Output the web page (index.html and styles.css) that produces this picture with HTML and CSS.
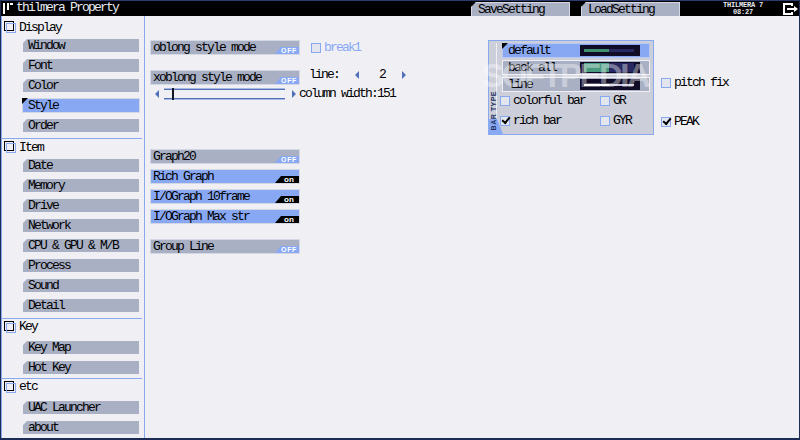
FILE: index.html
```html
<!DOCTYPE html>
<html lang="en">
<head>
    <meta charset="UTF-8">
    <title>thilmera Property</title>
    <link rel="stylesheet" href="styles.css">
</head>
<body>
    <div class="titlebar">
        <svg class="logo" width="12" height="14" viewBox="0 0 12 14"><path d="M0 2h2v11H0zM4 2h2v7H4zM7 2h3v2H7z" fill="#fff"/></svg>
        <span class="app-title">thilmera Property</span>
        <div class="tab tab-save">SaveSetting</div>
        <div class="tab tab-load">LoadSetting</div>
        <div class="clock">THILMERA 7<br>08:27</div>
        <svg class="exit" width="15" height="12" viewBox="0 0 15 12"><path d="M9 3V1H1v10h8V9" fill="none" stroke="#fff" stroke-width="2"/><path d="M4 5h7V3l4 3-4 3V7H4z" fill="#fff"/></svg>
    </div>

    <div class="content">
        <nav class="sidebar">
            <div class="group">
                <div class="group-head head-21"><span class="box"></span>Display</div>
                <div class="item">Window</div>
                <div class="item">Font</div>
                <div class="item">Color</div>
                <div class="item selected">Style</div>
                <div class="item">Order</div>
            </div>
            <div class="group">
                <div class="group-head"><span class="box"></span>Item</div>
                <div class="item">Date</div>
                <div class="item">Memory</div>
                <div class="item">Drive</div>
                <div class="item">Network</div>
                <div class="item">CPU &amp; GPU &amp; M/B</div>
                <div class="item">Process</div>
                <div class="item">Sound</div>
                <div class="item">Detail</div>
            </div>
            <div class="group group-short">
                <div class="group-head head-22"><span class="box"></span>Key</div>
                <div class="item">Key Map</div>
                <div class="item">Hot Key</div>
            </div>
            <div class="group group-last">
                <div class="group-head head-22"><span class="box"></span>etc</div>
                <div class="item">UAC Launcher</div>
                <div class="item">about</div>
            </div>
        </nav>

        <main class="main">
            <div class="options">
                <div class="row">
                    <div class="toggle">oblong style mode<span class="flag">OFF</span></div>
                    <label class="check check-off"><span class="tick"></span>break1</label>
                </div>
                <div class="row row-xoblong">
                    <div class="toggle">xoblong style mode<span class="flag">OFF</span></div>
                    <div class="line-count">
                        <span>line:</span>
                        <span class="arrow arrow-left"></span>
                        <span class="line-value">2</span>
                        <span class="arrow arrow-right"></span>
                    </div>
                </div>
                <div class="row row-slider">
                    <span class="arrow arrow-left"></span>
                    <div class="slider"><span class="thumb"></span></div>
                    <span class="arrow arrow-right"></span>
                    <span class="slider-label">column width:151</span>
                </div>

                <div class="stack">
                    <div class="toggle">Graph20<span class="flag">OFF</span></div>
                    <div class="toggle active">Rich Graph<span class="flag flag-on">on</span></div>
                    <div class="toggle active">I/OGraph 10frame<span class="flag flag-on">on</span></div>
                    <div class="toggle active">I/OGraph Max str<span class="flag flag-on">on</span></div>
                </div>
                <div class="toggle group-line">Group Line<span class="flag">OFF</span></div>
            </div>

            <div class="bar-area">
                <div class="bar-panel">
                    <div class="panel-side"></div>
                    <div class="panel-corner"></div>
                    <span class="side-text">BAR TYPE</span>
                    <div class="bar-type selected-type">default<span class="swatch"><span class="meter meter-default"></span></span></div>
                    <div class="bar-type">back all<span class="swatch"><span class="meter meter-all"></span></span></div>
                    <div class="bar-type">line<span class="swatch"><span class="meter meter-line"></span></span></div>
                    <div class="panel-checks">
                        <label class="check"><span class="tick"></span>colorful bar</label>
                        <label class="check"><span class="tick"></span>GR</label>
                        <label class="check"><span class="tick on"></span>rich bar</label>
                        <label class="check"><span class="tick"></span>GYR</label>
                    </div>
                </div>
                <div class="bar-extra">
                    <label class="check"><span class="tick"></span>pitch fix</label>
                    <label class="check"><span class="tick on"></span>PEAK</label>
                </div>
                <div class="watermark">SOFTPEDIA</div>
            </div>
        </main>
    </div>
</body>
</html>
```

FILE: styles.css
```css
body {
    margin: 0;
    width: 800px;
    height: 440px;
    overflow: hidden;
    background-color: #f0f0f4;
    color: #000;
    font-family: "Liberation Mono", "DejaVu Sans Mono", monospace;
    font-size: 13px;
    letter-spacing: -1.8px;
    line-height: 14px;
    display: flex;
    flex-direction: column;
    box-sizing: border-box;
    border-bottom: 2px solid #1c2c54;
    border-left: 1px solid #1c2c54;
    border-right: 1px solid #1c2c54;
}

/* top bar */
.titlebar {
    height: 15px;
    flex: none;
    background-color: #000;
    border-top: 1px solid #2c3c70;
    display: flex;
    align-items: flex-end;
    color: #fff;
}

.logo {
    margin: 0 0 1px 2px;
}

.app-title {
    margin: 0 0 1px 1px;
    width: 455px;
    flex: none;
    color: #e8e8f0;
}

.tab {
    width: 99px;
    height: 14px;
    flex: none;
    box-sizing: border-box;
    padding-left: 6px;
    background-color: #a9b0c4;
    border: 1px solid #d4d8e4;
    border-bottom: none;
    color: #000;
    line-height: 13px;
    clip-path: polygon(5px 0, 100% 0, 100% 100%, 0 100%, 0 5px);
}

.tab-load {
    margin-left: 11px;
}

.clock {
    width: 44px;
    margin-left: 41px;
    height: 14px;
    flex: none;
    color: #e8e8f0;
    font-size: 7px;
    font-weight: bold;
    line-height: 7px;
    letter-spacing: -0.2px;
    text-align: center;
}

.exit {
    margin: 0 1px 1px 18px;
}

.content {
    flex: 1;
    display: flex;
    min-height: 0;
}

/* left menu */
.sidebar {
    width: 142px;
    flex: none;
    border-left: 1px solid #88a8f0;
    border-right: 1px solid #88a8f0;
    padding-top: 2px;
}

.group {
    border-bottom: 1px solid #88a8f0;
    margin-right: 2px;
    padding-bottom: 6px;
}

.group-short {
    padding-bottom: 4px;
}

.group-last {
    border-bottom: none;
}

.group-head {
    height: 20px;
    box-sizing: border-box;
    padding: 2px 0 0 17px;
    position: relative;
}

.head-21 {
    height: 21px;
    padding-top: 3px;
}

.head-22 {
    height: 22px;
    padding-top: 1px;
}

.box {
    position: absolute;
    left: 2px;
    top: 2px;
    width: 8px;
    height: 8px;
    border: 1px solid #000;
}

.head-21 .box {
    top: 3px;
}

.box::after {
    content: "";
    position: absolute;
    left: 1px;
    top: 1px;
    width: 8px;
    height: 8px;
    border: 1px solid #88a8f0;
}

.item {
    height: 13px;
    margin: 0 3px 7px 21px;
    padding-left: 5px;
    background-color: #a9b0c4;
    clip-path: polygon(4px 0, 100% 0, 100% 100%, 0 100%, 0 4px);
}

.item:last-child {
    margin-bottom: 0;
}

.item.selected {
    height: 15px;
    margin: -1px 2px 6px 20px;
    padding-left: 6px;
    background-color: #88a8f4;
    clip-path: none;
    position: relative;
    outline: 1px solid #d4d8e4;
    outline-offset: -1px;
    line-height: 15px;
}

.item.selected::before {
    content: "";
    position: absolute;
    left: 0;
    top: 0;
    border-top: 6px solid #000;
    border-right: 6px solid transparent;
}

/* main area */
.main {
    flex: 1;
    display: flex;
    padding: 24px 0 0 5px;
}

.options {
    width: 338px;
    flex: none;
}

.row {
    display: flex;
    align-items: center;
}

.row-xoblong {
    margin-top: 15px;
}

.row-slider {
    margin-top: 3px;
    height: 12px;
    padding-left: 5px;
    position: relative;
}

.toggle {
    width: 150px;
    height: 15px;
    flex: none;
    box-sizing: border-box;
    padding: 0 0 0 2px;
    background-color: #a9b0c4;
    border: 1px solid #d4d8e4;
    position: relative;
    line-height: 13px;
}

.toggle.active {
    background-color: #88a8f4;
}

.flag {
    position: absolute;
    right: 0;
    bottom: 0;
    width: 24px;
    height: 7px;
    padding-left: 4px;
    box-sizing: border-box;
    background-color: #88a8f4;
    color: #fff;
    font-family: "Liberation Sans", sans-serif;
    font-size: 7px;
    font-weight: bold;
    line-height: 7px;
    letter-spacing: 0.6px;
    text-align: center;
    clip-path: polygon(6px 0, 100% 0, 100% 100%, 0 100%);
}

.flag-on {
    background-color: #000;
    letter-spacing: 0;
    font-size: 8px;
}

.stack {
    margin-top: 49px;
    display: flex;
    flex-direction: column;
    gap: 5px;
}

.group-line {
    margin-top: 15px;
}

.check {
    display: flex;
    align-items: center;
    gap: 3px;
}

.check-off {
    margin-left: 11px;
    color: #88a8f4;
}

.tick {
    width: 8px;
    height: 8px;
    flex: none;
    border: 1px solid #88a8f0;
    background-color: #e4e6ee;
    position: relative;
}

.tick.on::after {
    content: "";
    position: absolute;
    left: 1px;
    top: 0;
    width: 6px;
    height: 3px;
    border-left: 2px solid #000;
    border-bottom: 2px solid #000;
    transform: rotate(-50deg);
}

.line-count {
    display: flex;
    align-items: center;
    margin: -5px 0 0 9px;
}

.line-value {
    width: 20px;
    margin-left: 13px;
    text-align: center;
}

.arrow {
    width: 0;
    height: 0;
    flex: none;
    border-top: 4px solid transparent;
    border-bottom: 4px solid transparent;
}

.arrow-left {
    border-right: 4px solid #5070b8;
}

.arrow-right {
    border-left: 4px solid #5070b8;
}

.line-count .arrow-left {
    margin-left: 16px;
}

.line-count .arrow-right {
    margin-left: 10px;
}

.slider {
    width: 121px;
    height: 8px;
    margin: 0 7px 0 5px;
    flex: none;
    position: relative;
    border-top: 1px solid #5070b8;
    border-bottom: 1px solid #5070b8;
    box-shadow: 0 -1px 0 #a9b8e0, 0 1px 0 #a9b8e0;
}

.thumb {
    position: absolute;
    left: 8px;
    top: -2px;
    width: 2px;
    height: 12px;
    background-color: #101828;
}

.slider-label {
    margin-left: 3px;
    line-height: 14px;
}

/* bar type panel */
.bar-area {
    position: relative;
    display: flex;
}

.bar-panel {
    width: 166px;
    height: 95px;
    flex: none;
    box-sizing: border-box;
    background-color: #ccced9;
    border: 1px solid #88a8f0;
    padding: 2px 0 0 13px;
    position: relative;
}

.panel-side {
    position: absolute;
    left: 0;
    top: 2px;
    bottom: 16px;
    width: 7px;
    border-right: 1px solid #f0f0f4;
}

.panel-corner {
    position: absolute;
    left: 0;
    bottom: 0;
    width: 14px;
    height: 15px;
    background-color: #88a8f4;
    clip-path: polygon(0 0, 8px 0, 14px 100%, 0 100%);
}

.side-text {
    position: absolute;
    left: 1px;
    bottom: 4px;
    writing-mode: vertical-rl;
    rotate: 180deg;
    font-family: "Liberation Sans", sans-serif;
    font-size: 7px;
    font-weight: bold;
    line-height: 7px;
    letter-spacing: 0.5px;
    white-space: nowrap;
    color: #203060;
}

.bar-type {
    width: 148px;
    height: 15px;
    box-sizing: border-box;
    margin-bottom: 2px;
    padding-left: 5px;
    border: 1px solid #f0f0f4;
    background-color: #a9b0c4;
    position: relative;
    line-height: 13px;
}

.selected-type {
    background-color: #88a8f4;
    border-color: #b8c8f0;
}

.selected-type::before {
    content: "";
    position: absolute;
    left: -1px;
    top: -1px;
    border-top: 6px solid #000;
    border-right: 6px solid transparent;
}

.swatch {
    position: absolute;
    right: 9px;
    top: 1px;
    width: 60px;
    height: 11px;
    background-color: #100c28;
}

.meter {
    position: absolute;
    left: 4px;
    right: 6px;
    top: 4px;
    height: 3px;
    background: linear-gradient(to right, #409070 50%, #282860 50%);
}

.meter-all {
    top: 1px;
    height: 9px;
    background: linear-gradient(to right, #4a9a80 50%, #282860 50%);
}

.meter-line {
    top: 5px;
    height: 2px;
    background: linear-gradient(to right, #fff 50%, #c8c8e0 50%);
}

.panel-checks {
    display: grid;
    grid-template-columns: 100px auto;
    row-gap: 6px;
    margin: 2px 0 0 -2px;
}

.bar-extra {
    margin-left: 7px;
    padding-top: 36px;
    display: flex;
    flex-direction: column;
    gap: 25px;
}

.watermark {
    position: absolute;
    left: -6px;
    top: 21px;
    color: rgba(255, 255, 255, 0.4);
    font-family: "Liberation Sans", sans-serif;
    font-size: 33px;
    font-weight: bold;
    letter-spacing: -2.5px;
    line-height: 30px;
    pointer-events: none;
}
```
